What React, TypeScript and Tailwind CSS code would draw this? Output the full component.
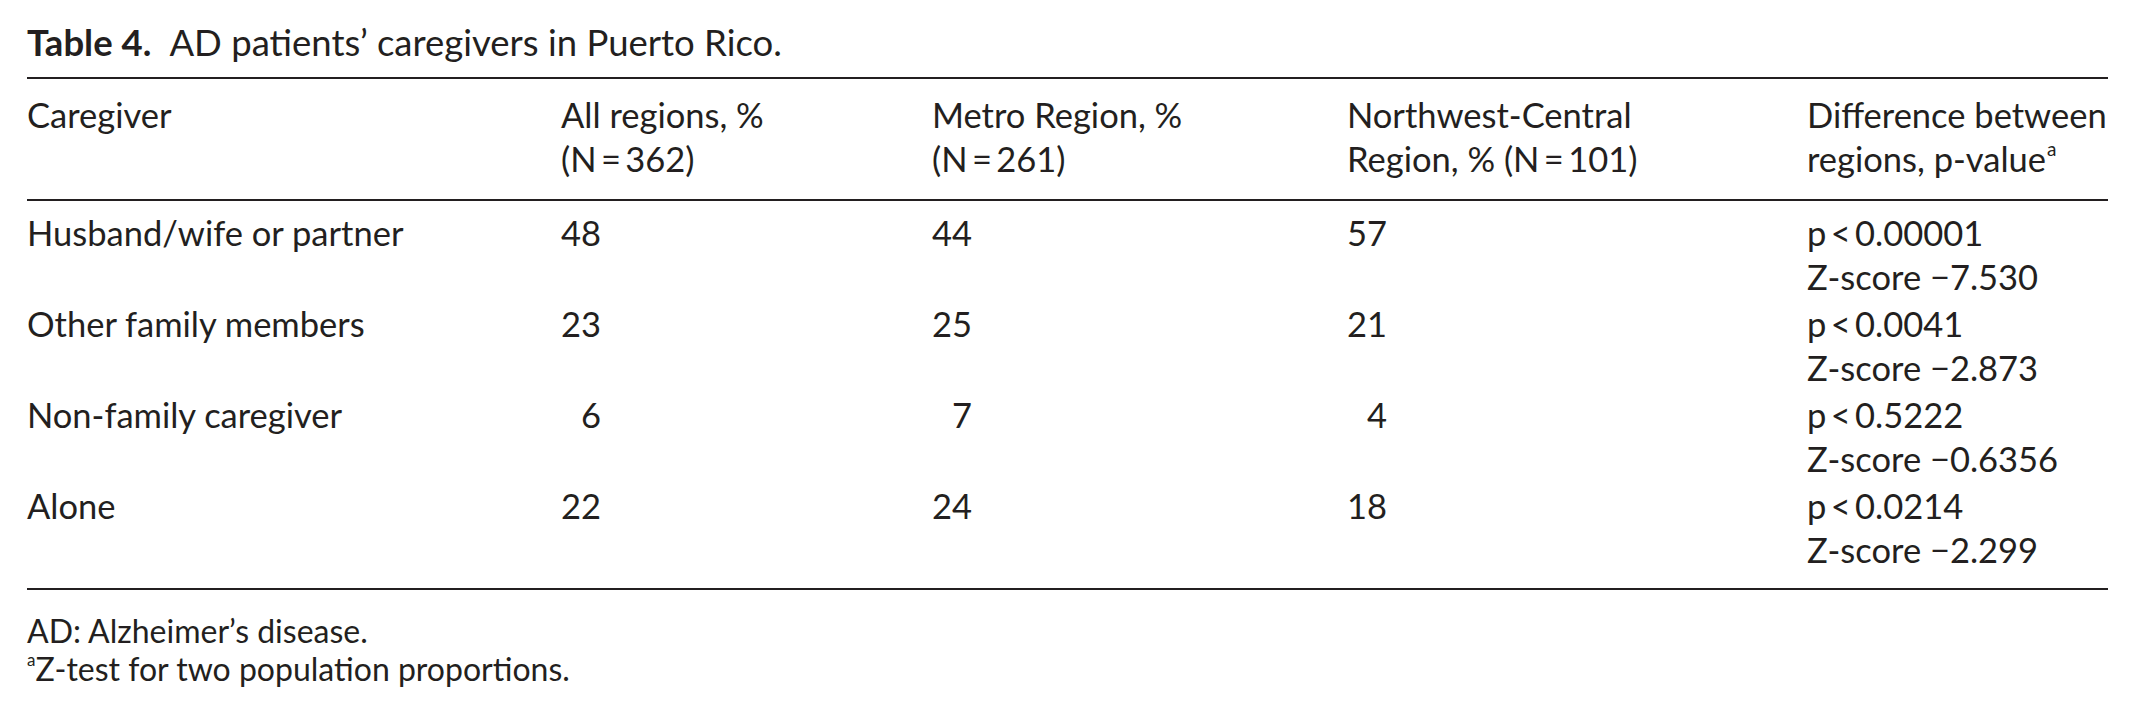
const rows = [
  { label: 'Husband/wife or partner', all: '48', metro: '44', nw: '57', p: '0.00001', z: '7.530' },
  { label: 'Other family members', all: '23', metro: '25', nw: '21', p: '0.0041', z: '2.873' },
  { label: 'Non-family caregiver', all: '6', metro: '7', nw: '4', p: '0.5222', z: '0.6356' },
  { label: 'Alone', all: '22', metro: '24', nw: '18', p: '0.0214', z: '2.299' },
];

const grid = 'grid grid-cols-[534px_371px_415px_460px_1fr]';

function Num({ v }: { v: string }) {
  return <span className="inline-block w-[2ch] text-right tabular-nums">{v}</span>;
}

export default function App() {
  return (
    <div
      className="w-[2135px] h-[715px] bg-white px-[27px] pt-[20px] text-[#231f20] text-[34.5px]"
      style={{ fontFamily: 'Lato, "Open Sans", sans-serif' }}
    >
      <div className="leading-[44px] h-[44px] text-[36.5px]">
        <span className="font-bold">Table 4.</span>
        <span className="ml-[18px]">AD patients’ caregivers in Puerto Rico.</span>
      </div>

      <div className="mt-[13px] border-t-2 border-[#231f20]" />

      <div className={`${grid} leading-[44px] pt-[14px] pb-[18px] border-b-2 border-[#231f20]`}>
        <div>Caregiver</div>
        <div>
          All regions, %<br />(N{'\u2009'}={'\u2009'}362)
        </div>
        <div>
          Metro Region, %<br />(N{'\u2009'}={'\u2009'}261)
        </div>
        <div>
          Northwest-Central<br />Region, % (N{'\u2009'}={'\u2009'}101)
        </div>
        <div>
          Difference between<br />regions, p-value<sup className="text-[19px] align-[7px] ml-[1px]">a</sup>
        </div>
      </div>

      <div className="pt-[10px] pb-[13px] border-b-2 border-[#231f20]">
        {rows.map(r => (
          <div key={r.label} className={`${grid} leading-[44px] pb-[3px]`}>
            <div>{r.label}</div>
            <div><Num v={r.all} /></div>
            <div><Num v={r.metro} /></div>
            <div><Num v={r.nw} /></div>
            <div>
              p{'\u2009'}&lt;{'\u2009'}{r.p}
              <br />
              Z-score −{r.z}
            </div>
          </div>
        ))}
      </div>

      <div className="pt-[22px] text-[32px] leading-[38px]">
        <div>AD: Alzheimer’s disease.</div>
        <div>
          <sup className="text-[17px] align-[7px]">a</sup>Z-test for two population proportions.
        </div>
      </div>
    </div>
  );
}
